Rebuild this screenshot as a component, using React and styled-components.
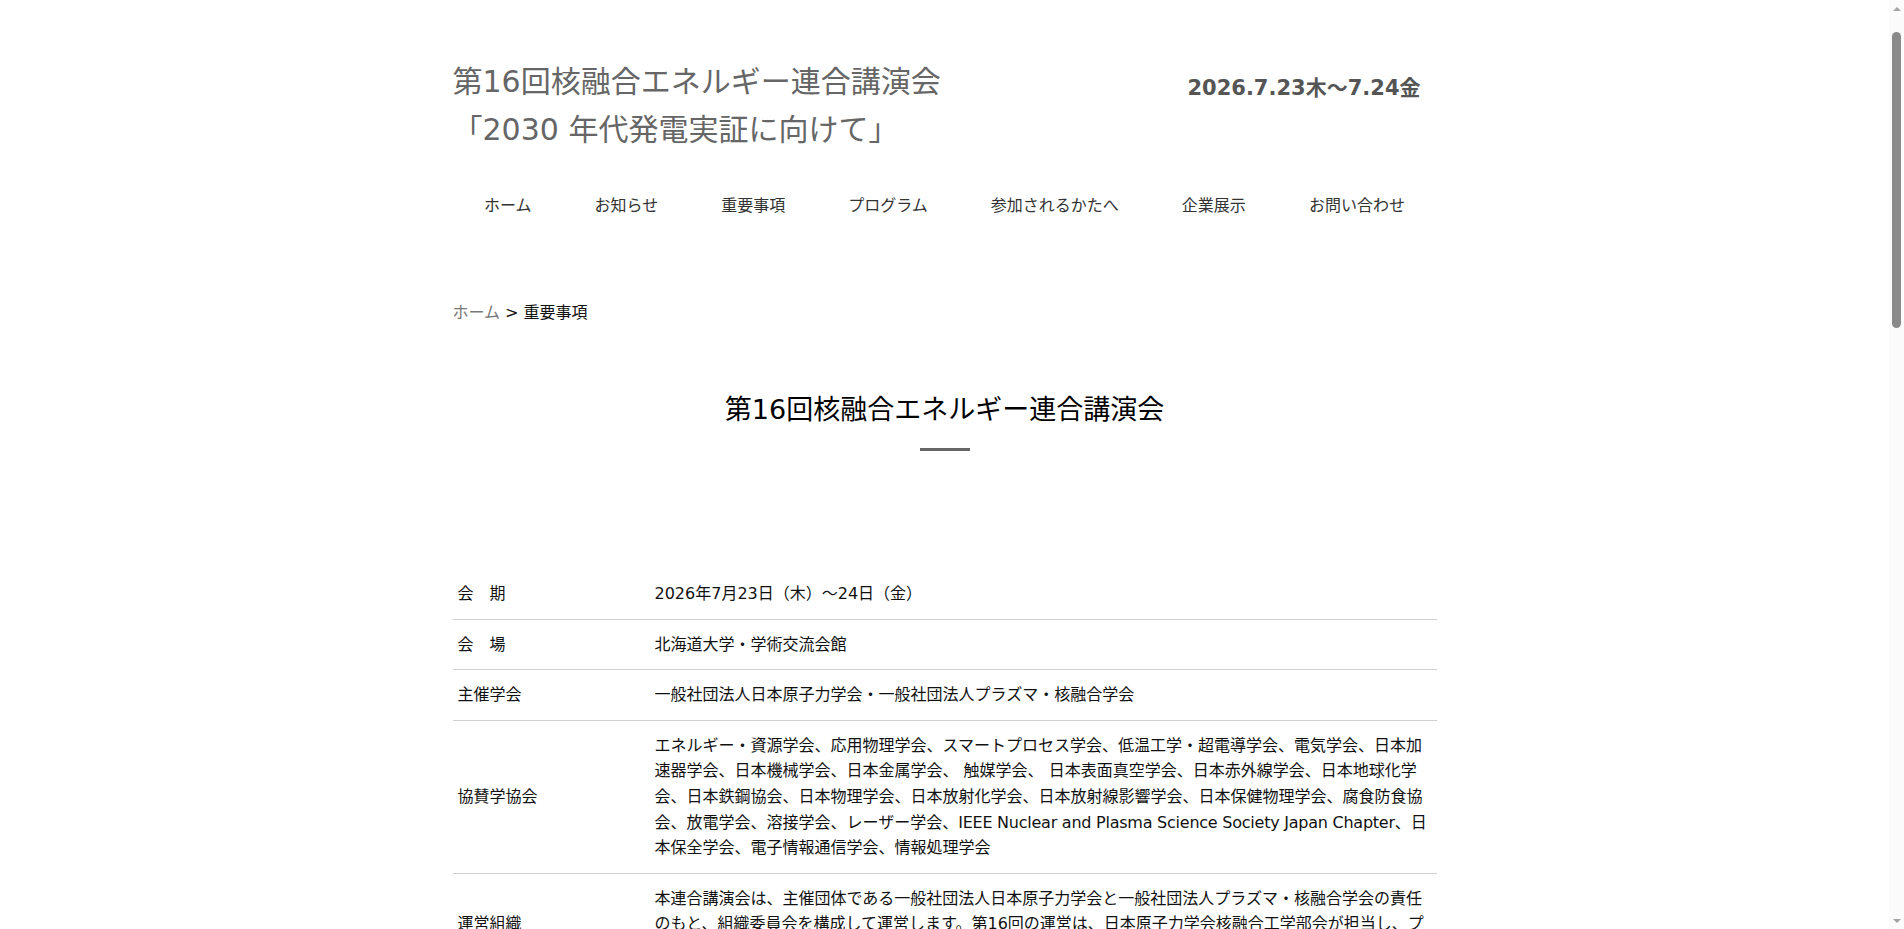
import React from "react";
import styled, { createGlobalStyle } from "styled-components";

const GlobalStyle = createGlobalStyle`
  html { scrollbar-width: none; }
  html, body { margin: 0; padding: 0; background: #fff; }
  body {
    font-family: "DejaVu Sans", "Noto Sans CJK JP", sans-serif;
    color: #222;
  }
`;

const Viewport = styled.div`
  margin-right: 15px;
`;

const Page = styled.div`
  width: 984px;
  margin: 0 auto;
  padding-top: 58px;
`;

const TitleRow = styled.header`
  display: flex;
  justify-content: space-between;
  align-items: flex-start;
`;

const SiteTitle = styled.h1`
  margin: 0;
  font-size: 30px;
  line-height: 48px;
  font-weight: 400;
  color: #666;
`;

const EventDate = styled.div`
  margin: 15px 16px 0 0;
  font-size: 21px;
  line-height: 30px;
  font-weight: 700;
  color: #555;
`;

const Nav = styled.nav`
  display: flex;
  justify-content: space-around;
  margin-top: 40px;
`;

const NavLink = styled.a`
  font-size: 16px;
  line-height: 24px;
  color: #333;
  text-decoration: none;
`;

const Breadcrumb = styled.div`
  margin-top: 83px;
  font-size: 16px;
  line-height: 24px;
  color: #111;
`;

const CrumbLink = styled.a`
  color: #777;
  text-decoration: none;
`;

const SectionTitle = styled.h2`
  margin: ${(p) => (p.$first ? 65 : 66)}px 0 0;
  text-align: center;
  font-size: 27px;
  line-height: 40px;
  font-weight: 400;
  color: #000;
  &::after {
    content: "";
    display: block;
    width: 50px;
    height: 3px;
    margin: 18px auto 0;
    background: #666;
  }
`;

const InfoList = styled.div`
  margin-top: ${(p) => p.$top || 118}px;
`;

const Row = styled.div`
  display: flex;
  align-items: center;
  border-bottom: 1px solid #d0d0d0;
  font-size: 16px;
  line-height: 25.6px;
  color: #111;
`;

const Label = styled.div`
  flex: 0 0 202px;
  box-sizing: border-box;
  padding: 12px 5px;
`;

const Value = styled.div`
  flex: 1;
  padding: 12px 0;
`;

const Latin = styled.span`
  letter-spacing: -0.015em;
`;

const Footer = styled.footer`
  margin-top: 120px;
  padding: 40px 0 60px;
  border-top: 1px solid #e5e5e5;
  text-align: center;
  font-size: 14px;
  line-height: 24px;
  color: #666;
`;

/* drawn scrollbar, lying over the right edge of the window */
const ScrollBar = styled.aside`
  position: fixed;
  top: 0;
  right: 0;
  width: 15px;
  height: 100vh;
  background: #fbfbfb;
  display: flex;
  flex-direction: column;
  align-items: center;
`;

const Arrow = styled.div`
  flex: 0 0 17px;
  display: flex;
  align-items: center;
  justify-content: center;
  &::before {
    content: "";
    width: 0;
    height: 0;
    border-left: 4px solid transparent;
    border-right: 4px solid transparent;
    ${(p) =>
      p.$down
        ? "border-top: 4px solid #a3a3a3;"
        : "border-bottom: 4px solid #a3a3a3;"}
  }
`;

const Track = styled.div`
  flex: 1;
  width: 100%;
  display: flex;
  justify-content: center;
  padding-top: 15px;
`;

const Thumb = styled.div`
  width: 9px;
  height: 296px;
  border-radius: 5px;
  background: #8a8a8a;
`;

const navItems = [
  "ホーム",
  "お知らせ",
  "重要事項",
  "プログラム",
  "参加されるかたへ",
  "企業展示",
  "お問い合わせ",
];

const rows = [
  ["会　期", "2026年7月23日（木）～24日（金）"],
  ["会　場", "北海道大学・学術交流会館"],
  ["主催学会", "一般社団法人日本原子力学会・一般社団法人プラズマ・核融合学会"],
  [
    "協賛学協会",
    <>
      エネルギー・資源学会、応用物理学会、スマートプロセス学会、低温工学・超電導学会、電気学会、日本加速器学会、日本機械学会、日本金属学会、
      触媒学会、
      日本表面真空学会、日本赤外線学会、日本地球化学会、日本鉄鋼協会、日本物理学会、日本放射化学会、日本放射線影響学会、日本保健物理学会、腐食防食協会、放電学会、溶接学会、レーザー学会、
      <Latin>IEEE Nuclear and Plasma Science Society Japan Chapter</Latin>
      、日本保全学会、電子情報通信学会、情報処理学会
    </>,
  ],
  [
    "運営組織",
    "本連合講演会は、主催団体である一般社団法人日本原子力学会と一般社団法人プラズマ・核融合学会の責任のもと、組織委員会を構成して運営します。第16回の運営は、日本原子力学会核融合工学部会が担当し、プラズマ・核融合学会と協力して準備を進めています。",
  ],
  [
    "組織委員会",
    "委員長、副委員長、プログラム委員会、実行委員会、企業展示担当、広報担当、会計担当の各委員により構成されます。",
  ],
  [
    "講演形式",
    "招待講演、一般講演（口頭発表・ポスター発表）、特別セッション、企業展示",
  ],
  [
    "参加費",
    "一般（会員）10,000円、一般（非会員）15,000円、学生 3,000円、懇親会 別途",
  ],
  [
    "参加登録",
    "事前参加登録は本ウェブサイトより受け付けます。当日登録も可能ですが、できるだけ事前登録をお願いいたします。",
  ],
];

const dates = [
  ["講演申込開始", "2026年3月上旬"],
  ["講演申込締切", "2026年4月下旬"],
  ["プログラム公開", "2026年5月下旬"],
  ["予稿原稿締切", "2026年6月中旬"],
  ["事前参加登録締切", "2026年7月上旬"],
  ["企業展示申込締切", "2026年6月下旬"],
  ["懇親会", "2026年7月23日（木）夕刻"],
];

export default function App() {
  return (
    <>
      <GlobalStyle />
      <Viewport>
        <Page>
          <TitleRow>
            <SiteTitle>
              第16回核融合エネルギー連合講演会
              <br />
              「2030 年代発電実証に向けて」
            </SiteTitle>
            <EventDate>2026.7.23木〜7.24金</EventDate>
          </TitleRow>
          <Nav>
            {navItems.map((n) => (
              <NavLink key={n} href="#">
                {n}
              </NavLink>
            ))}
          </Nav>
          <Breadcrumb>
            <CrumbLink href="#">ホーム</CrumbLink> &gt; 重要事項
          </Breadcrumb>
          <SectionTitle $first>第16回核融合エネルギー連合講演会</SectionTitle>
          <InfoList>
            {rows.map(([l, v]) => (
              <Row key={l}>
                <Label>{l}</Label>
                <Value>{v}</Value>
              </Row>
            ))}
          </InfoList>
          <SectionTitle>重要日程</SectionTitle>
          <InfoList $top={90}>
            {dates.map(([l, v]) => (
              <Row key={l}>
                <Label>{l}</Label>
                <Value>{v}</Value>
              </Row>
            ))}
          </InfoList>
          <Footer>
            第16回核融合エネルギー連合講演会 組織委員会
            <br />
            © 第16回核融合エネルギー連合講演会
          </Footer>
        </Page>
      </Viewport>
      <ScrollBar aria-hidden="true">
        <Arrow />
        <Track>
          <Thumb />
        </Track>
        <Arrow $down />
      </ScrollBar>
    </>
  );
}
